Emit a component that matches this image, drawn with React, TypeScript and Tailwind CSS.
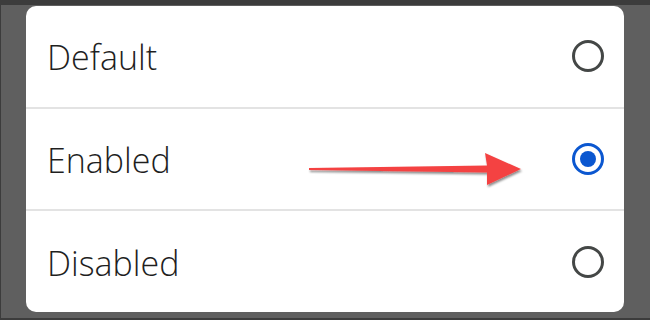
import * as React from "react"

const options = [
  { label: "Default", checked: false },
  { label: "Enabled", checked: true },
  { label: "Disabled", checked: false },
]

function Radio({ checked }: { checked: boolean }) {
  if (checked) {
    return (
      <svg width="34" height="34" viewBox="0 0 34 34">
        <circle cx="17" cy="17" r="14.5" fill="none" stroke="#0b57d0" strokeWidth="3" />
        <circle cx="17" cy="17" r="8" fill="#0b57d0" />
      </svg>
    )
  }
  return (
    <svg width="34" height="34" viewBox="0 0 34 34">
      <circle cx="17" cy="17" r="14.5" fill="none" stroke="#444746" strokeWidth="3" />
    </svg>
  )
}

function Arrow() {
  return (
    <svg
      className="absolute left-[300px] top-[141px]"
      width="230"
      height="46"
      viewBox="0 0 230 46"
    >
      <defs>
        <filter id="sh" x="-10%" y="-30%" width="120%" height="160%">
          <feDropShadow dx="1" dy="2" stdDeviation="1.2" floodColor="#000" floodOpacity="0.45" />
        </filter>
      </defs>
      <path
        d="M8 22 L186 19.5 L184 7 L220 23 L186 39 L186 26.5 L8 24 Z"
        fill="#f44343"
        filter="url(#sh)"
      />
    </svg>
  )
}

export default function App() {
  return (
    <div className="relative w-[650px] h-[320px] bg-[#5f5f5f] border-l border-t-[5px] border-b-2 border-[#3c3c3c] pl-[25px] pt-px">
      <div className="w-[598px] h-[306px] bg-white rounded-[10px] flex flex-col">
        {options.map((o, i) => (
          <div
            key={o.label}
            className={`flex-1 flex items-center justify-between pl-[21px] pr-[19px] ${
              i < options.length - 1 ? "border-b-2 border-[#e3e3e3]" : ""
            }`}
          >
            <span
              className="text-[34px] font-[350] text-[#1f1f1f] pt-[3px]"
              style={{ fontFamily: '"Open Sans", "Noto Sans", sans-serif' }}
            >
              {o.label}
            </span>
            <Radio checked={o.checked} />
          </div>
        ))}
      </div>
      <Arrow />
    </div>
  )
}
